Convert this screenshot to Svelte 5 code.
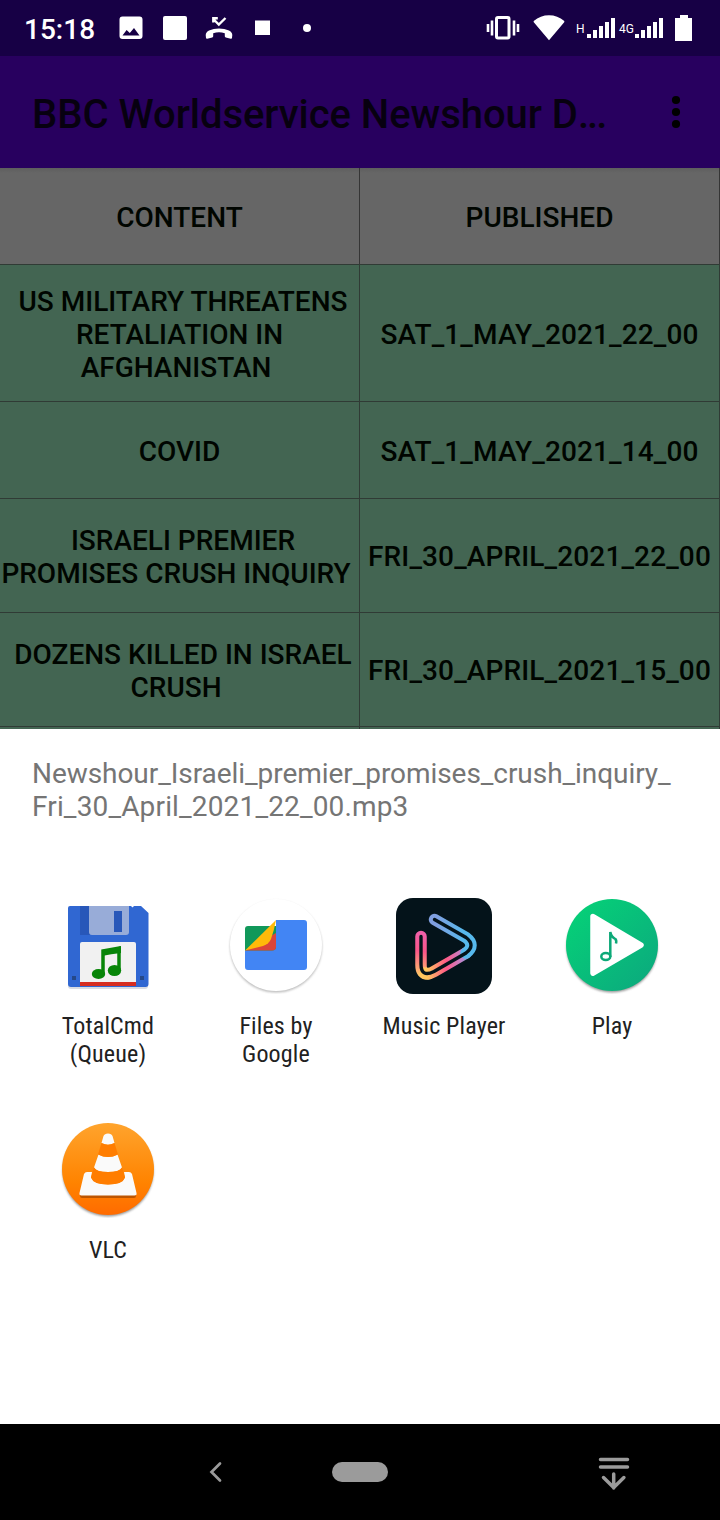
<script>
  const rows = [
    { content: [' US MILITARY THREATENS', 'RETALIATION IN', 'AFGHANISTAN '], published: 'SAT_1_MAY_2021_22_00', height: 137 },
    { content: ['COVID'], published: 'SAT_1_MAY_2021_14_00', height: 97 },
    { content: [' ISRAELI PREMIER', 'PROMISES CRUSH INQUIRY '], published: 'FRI_30_APRIL_2021_22_00', height: 114 },
    { content: [' DOZENS KILLED IN ISRAEL', 'CRUSH '], published: 'FRI_30_APRIL_2021_15_00', height: 114 }
  ];
</script>

{#snippet signal()}
  <svg class="signal" width="29" height="21" viewBox="0 0 29 21" fill="#fff">
    <rect x="0" y="16" width="4" height="4" /><rect x="6" y="12" width="4" height="8" />
    <rect x="12" y="8" width="4" height="12" /><rect x="18" y="4" width="4" height="16" />
    <rect x="24" y="0" width="4" height="20" />
  </svg>
{/snippet}

<div class="screen">
  <header class="status">
    <span class="clock">15:18</span>
    <svg class="notes" width="200" height="30" viewBox="116 13 200 30" fill="#fff">
      <path fill-rule="evenodd" d="M122.500 16.500h17q3 0 3 3v16.500q0 3-3 3h-17q-3 0-3-3V19.500q0-3 3-3zM122.500 35.500h17l-5.500-7.500-4.200 5-3.200-3z" />
      <rect x="163" y="16" width="24" height="24" rx="2" />
      <path d="M206 38q-1.500-5.500 3-7.500 4.500-2 10-2t10 2q4.500 2 3 7.500-.2 1-1.200.8l-5-1.300q-1-.3-1-1.300v-3q-5.800-1.700-11.600 0v3q0 1-1 1.300l-5 1.300q-1 .2-1.200-.8z" />
      <path d="M225.500 18l-6.700 6.500-5.500-5.500M213.300 22.500v-4.200h4.500" fill="none" stroke="#fff" stroke-width="2.400" />
      <rect x="255" y="20.500" width="15" height="14.500" />
      <circle cx="307" cy="28" r="4" />
    </svg>
    <svg class="vibrate" width="34" height="26" viewBox="0 0 34 26" fill="none" stroke="#fff">
      <rect x="10.500" y="2.500" width="12.500" height="20.500" rx="1.500" stroke-width="3" />
      <path d="M6 5.500v15M28 5.500v15" stroke-width="2.600" /><path d="M2 9v8M32 9v8" stroke-width="2.600" />
    </svg>
    <svg class="wifi" width="32" height="26" viewBox="0 0 32 26"><path d="M0.700 6Q7.500.3 16 .3T31.300 6Q31.500 7 31 7.600L16 25.200 1 7.600Q.4 7 .7 6z" fill="#fff" /></svg>
    <span class="net h">H</span>{@render signal()}
    <span class="net g">4G</span>{@render signal()}
    <svg class="battery" width="17" height="26" viewBox="0 0 17 26"><path d="M5 0h8v3h4v23H0V3h5z" fill="#fff" /></svg>
  </header>

  <div class="appbar">
    <h1>BBC Worldservice Newshour D<span class="dots">...</span></h1>
    <svg width="10" height="34" viewBox="0 0 10 34"><circle cx="5" cy="5" r="4.100" /><circle cx="5" cy="17" r="4.100" /><circle cx="5" cy="29" r="4.100" /></svg>
  </div>

  <main class="table">
    <div class="row head"><div class="cell">CONTENT</div><div class="cell">PUBLISHED</div></div>
    {#each rows as row}
      <div class="row" style="height: {row.height}px">
        <div class="cell">{row.content.join('\n')}</div>
        <div class="cell date">{row.published}</div>
      </div>
    {/each}
    <div class="row rest"><div class="cell"></div><div class="cell"></div></div>
  </main>

  <section class="sheet">
    <p class="file"><span>Newshour_Israeli_premier_promises_crush_inquiry_</span><br /><span class="second">Fri_30_April_2021_22_00.mp3</span></p>
    <div class="apps">
      <div class="app">
        <svg width="96" height="96" viewBox="0 0 96 96">
          <path d="M9 9.500h68l11 8V88q0 3-3 3H11q-3 0-3-3V11z" fill="#bfc5d0" opacity=".6" />
          <path d="M10 8h61l1.500 1.500L74 8h7l7.500 7v71q0 3-3 3H11q-3 0-3-3V10q0-2 2-2z" fill="#3067d2" />
          <path d="M20 8h10v29H20z" fill="#2857b9" />
          <path d="M29 8h40v26q0 3-3 3H32q-3 0-3-3z" fill="#98acd8" />
          <rect x="54" y="13" width="8" height="21" fill="#2857b9" />
          <path d="M20 46q0-2 2-2h52q2 0 2 2v38H20z" fill="#f1f1f1" /><path d="M20 84h56v4H20z" fill="#d62c20" />
          <rect x="12" y="78" width="4" height="4" fill="#254888" /><rect x="80" y="78" width="4" height="4" fill="#254888" />
          <path d="M43 75V53l16-3v22" fill="none" stroke="#078508" stroke-width="3.500" /><path d="M42 52q10 0 19-4v7q-10 1-19 3z" fill="#078508" />
          <ellipse cx="38.500" cy="76" rx="6.700" ry="5" fill="#078508" /><ellipse cx="54.500" cy="72.500" rx="6.700" ry="5.500" fill="#078508" />
        </svg>
        <span>TotalCmd<br />(Queue)</span>
      </div>
      <div class="app">
        <svg width="96" height="96" viewBox="0 0 96 96">
          <defs><filter id="soft" x="-20%" y="-20%" width="140%" height="140%"><feGaussianBlur stdDeviation="1" /></filter></defs>
          <circle cx="48" cy="48.500" r="46" fill="#999" opacity=".65" filter="url(#soft)" /><circle cx="48" cy="47" r="46" fill="#fff" />
          <rect x="17" y="28" width="34" height="42" rx="3" fill="#11985a" />
          <path d="M48 22h28q3 0 3 3v44q0 3-3 3H20q-3 0-3-3V52.500h27q4 0 4-4z" fill="#4285f4" />
          <path d="M17 52.500L48 35v14q0 3.500-4 3.500z" fill="#db453a" />
          <path d="M17 52.500L48 22q-2 11-5 19-2 5-8 7z" fill="#ffba09" />
        </svg>
        <span>Files by<br />Google</span>
      </div>
      <div class="app">
        <svg width="96" height="96" viewBox="0 0 96 96">
          <defs>
            <linearGradient id="warm" gradientUnits="userSpaceOnUse" x1="30" y1="80" x2="38" y2="38"><stop offset="0" stop-color="#ffca67" /><stop offset=".6" stop-color="#fc558a" /><stop offset="1" stop-color="#f060a8" /></linearGradient>
            <linearGradient id="edge" gradientUnits="userSpaceOnUse" x1="31" y1="0" x2="79" y2="0"><stop offset="0" stop-color="#ffc65d" /><stop offset=".4" stop-color="#ff5987" /><stop offset=".7" stop-color="#c681c7" /><stop offset="1" stop-color="#57b9ed" /></linearGradient>
            <linearGradient id="cool" gradientUnits="userSpaceOnUse" x1="40" y1="30" x2="68" y2="30"><stop offset="0" stop-color="#809fe0" /><stop offset="1" stop-color="#57b9ed" /></linearGradient>
          </defs>
          <rect width="96" height="96" rx="17" fill="#04131a" />
          <g fill="none" stroke-linecap="round">
            <path d="M25 38.500v28.500q0 9.500 7 9" stroke="url(#warm)" stroke-width="11.500" />
            <path d="M29 75q4 1.500 9-1.500L70 55" stroke="url(#edge)" stroke-width="11.500" />
            <path d="M38.500 21.500L70 39.500Q80 47 70 55" stroke="url(#cool)" stroke-width="11.500" />
            <path d="M38.500 21.500L70 39.500Q80 47 70 55L38 73.500Q25 80 25 66V38.500" stroke="#04131a" stroke-width="3.400" />
          </g>
        </svg>
        <span>Music Player</span>
      </div>
      <div class="app">
        <svg width="96" height="96" viewBox="0 0 96 96">
          <defs><linearGradient id="green" x1="0" y1="0" x2="1" y2="1"><stop stop-color="#05d477" /><stop offset="1" stop-color="#0ca77e" /></linearGradient></defs>
          <circle cx="48" cy="49" r="45.500" fill="#555" opacity=".6" filter="url(#soft)" /><circle cx="48" cy="47" r="46" fill="url(#green)" />
          <path d="M29 18.500L77 47 29 75z" fill="#fff" stroke="#fff" stroke-width="5.500" stroke-linejoin="round" />
          <g fill="none" stroke="#0da978" stroke-width="2.500"><ellipse cx="41.800" cy="58.500" rx="4.500" ry="3.500" /><path d="M46.300 59V34q1 5 5 7 1.500 1.500.7 4.500" /></g>
        </svg>
        <span>Play</span>
      </div>
      <div class="app">
        <svg width="96" height="96" viewBox="0 0 96 96">
          <defs><linearGradient id="orange" x1="0" y1="0" x2="0" y2="1"><stop stop-color="#ffa42d" /><stop offset=".65" stop-color="#ff8300" /><stop offset="1" stop-color="#ff6b00" /></linearGradient></defs>
          <circle cx="48" cy="49" r="45.500" fill="#555" opacity=".6" filter="url(#soft)" /><circle cx="48" cy="47" r="46" fill="url(#orange)" />
          <path d="M20 72h56v2q0 2-2 2H22q-2 0-2-2z" fill="#bd5500" />
          <path d="M43.500 14q1-2.500 4.500-2.500t4.500 2.500l2 7q-6.500 3.500-13 0zM38.500 32.500q9.500 5 19 0L62 45.500q-2.500 4.500-14 4.500t-14-4.500zM27 50h5l-1 5.500q2.500 7 17 7t17-7L64 50h5q2 0 3 2l4.500 19q.5 2.500-2 2.500h-53q-2.500 0-2-2.500L24 52q1-2 3-2z" fill="#fafafa" />
          <path d="M41.500 21q6.500 3.500 13 0l3.500 11.500q-10 5-20 0zM34 45.500q2.500 4.500 14 4.500t14-4.500l3 10q-2.500 7-17 7t-17-7z" fill="#ff7d00" />
        </svg>
        <span>VLC</span>
      </div>
    </div>
  </section>

  <nav>
    <svg width="720" height="96" viewBox="0 0 720 96" fill="none" stroke="#9b9b9b">
      <path d="M220 39.500l-8.500 8.500 8.500 8.500" stroke-width="2.700" stroke-linecap="round" />
      <rect x="332" y="38" width="56" height="20" rx="10" fill="#9b9b9b" stroke="none" />
      <path d="M600.500 35.500h27M600.500 43h27M613.700 50v14M603.500 53.500l10.200 10 10.200-10" stroke-width="3.500" stroke-linecap="round" />
    </svg>
  </nav>
</div>

<style>
  :global(body) { margin: 0; }
  .screen { width: 720px; height: 1520px; display: flex; flex-direction: column; overflow: hidden; background: #000; font-family: Roboto, sans-serif; }
  svg { display: block; flex: none; }
  .status { height: 56px; flex: none; background: #170045; display: flex; align-items: flex-start; color: #fff; }
  .clock { width: 92px; padding-left: 24px; font-size: 28px; font-weight: 500; line-height: 33px; margin-top: 13px; }
  .notes { margin-top: 13px; }
  .vibrate { margin: 15px 0 0 170px; }
  .wifi { margin: 15px 0 0 13px; }
  .net { font-size: 12px; line-height: 14px; margin-top: 22px; white-space: nowrap; flex: none; }
  .h { width: 11px; margin-left: 11px; }
  .g { width: 16px; margin-left: 3px; font-size: 12px; }
  .signal { margin-top: 18px; }
  .battery { margin: 15px 0 0 11px; }
  .appbar { height: 112px; flex: none; background: #28005f; display: flex; align-items: center; justify-content: space-between; padding: 0 39px 0 32px; box-sizing: border-box; }
  h1 { margin: 4px 0 0; font-size: 40px; line-height: 47px; font-weight: 500; color: #070010; white-space: nowrap; letter-spacing: -.04px; }
  .dots { letter-spacing: -2px; }
  .table { height: 561px; flex: none; overflow: hidden; background: #436552; }
  .row { display: grid; grid-template-columns: 360px 360px; box-sizing: border-box; border-bottom: 1px solid #303b35; }
  .head { height: 97px; background: linear-gradient(#5e5e5e, #666 5px); }
  .rest { height: 3px; border: 0; }
  .cell { box-sizing: border-box; border-right: 1px solid #303b35; display: flex; align-items: center; justify-content: center; padding-top: 2px; text-align: center; font-size: 28px; font-weight: 500; line-height: 33px; white-space: pre; color: #000500; }
  .date { letter-spacing: .13px; }
  .head .cell { border-color: #353535; }
  .sheet { height: 695px; flex: none; background: #fff; }
  .file { margin: 0; padding: 28px 32px 0; font-size: 28px; line-height: 33px; color: #757575; letter-spacing: -.06px; white-space: nowrap; }
  .second { letter-spacing: .15px; }
  .apps { display: grid; grid-template-columns: repeat(4, 168px); grid-auto-rows: 224px; padding: 75px 24px 0; }
  .app { display: flex; flex-direction: column; align-items: center; }
  .app span { margin-top: 18px; text-align: center; font-family: "Roboto Condensed", Roboto, sans-serif; font-stretch: 75%; font-size: 24px; line-height: 28px; letter-spacing: .15px; color: #212121; white-space: nowrap; }
  nav { height: 96px; flex: none; background: #000; }
</style>
